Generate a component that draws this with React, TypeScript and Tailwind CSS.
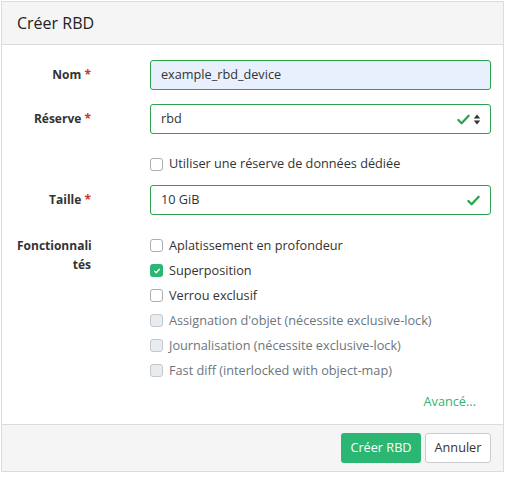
const Check = ({ className }: { className?: string }) => (
  <svg viewBox="0 0 16 16" className={className} fill="none">
    <path d="M2.5 8.5l3.5 3.5 7.5-8" stroke="#2ca24d" strokeWidth="2.4" strokeLinecap="round" strokeLinejoin="round" />
  </svg>
)

const Label = ({ text }: { text: string }) => (
  <label className="w-[74px] shrink-0 text-right font-bold text-[12px] text-[#333]">
    {text} <span className="text-[#c0392b]">*</span>
  </label>
)

const Box = ({ checked, disabled }: { checked?: boolean; disabled?: boolean }) => {
  if (checked)
    return (
      <span className="flex h-[13px] w-[13px] shrink-0 items-center justify-center rounded-[3px] bg-[#2bb673]">
        <svg viewBox="0 0 10 10" className="h-[8px] w-[8px]" fill="none">
          <path d="M2 5.2l2 2 4-4.4" stroke="#fff" strokeWidth="1.6" strokeLinecap="round" strokeLinejoin="round" />
        </svg>
      </span>
    )
  return (
    <span
      className={
        disabled
          ? 'h-[13px] w-[13px] shrink-0 rounded-[3px] border border-[#c3c8cd] bg-[#e9ecef]'
          : 'h-[13px] w-[13px] shrink-0 rounded-[3px] border border-[#a9aeb3] bg-white'
      }
    />
  )
}

const Option = ({ text, checked, disabled }: { text: string; checked?: boolean; disabled?: boolean }) => (
  <div className="flex h-[25px] items-center gap-[6px]">
    <Box checked={checked} disabled={disabled} />
    <span className={disabled ? 'text-[#6c757d]' : 'text-[#333]'}>{text}</span>
  </div>
)

export default function App() {
  return (
    <div className="h-[477px] w-[510px] bg-white pl-[1px] pt-[1px] text-[12.7px] font-['Open_Sans',sans-serif] text-[#333]">
      <div className="flex h-[471px] w-[503px] flex-col border border-[#dcdcdc]">
        <div className="flex h-[43px] shrink-0 items-center border-b border-[#dcdcdc] bg-[#f5f5f5] pl-[15px] text-[16px] text-[#222]">
          Créer RBD
        </div>

        <div className="flex flex-1 flex-col pl-[15px] pr-[12px] pt-[15px]">
          <div className="flex items-center">
            <Label text="Nom" />
            <div className="ml-[59px] flex h-[30px] flex-1 items-center rounded-[3px] border border-[#2ca24d] bg-[#e8f0fe] px-[10px]">
              example_rbd_device
            </div>
          </div>

          <div className="mt-[14px] flex items-center">
            <Label text="Réserve" />
            <div className="ml-[59px] flex h-[30px] flex-1 items-center rounded-[3px] border border-[#2ca24d] bg-white pl-[10px] pr-[9px]">
              <span className="flex-1">rbd</span>
              <Check className="h-[15px] w-[15px]" />
              <svg viewBox="0 0 8 12" className="ml-[2px] h-[11px] w-[8px]">
                <path d="M4 0.5L7.5 5H0.5z M4 11.5L0.5 7H7.5z" fill="#333" />
              </svg>
            </div>
          </div>

          <div className="ml-[133px] mt-[16px] flex h-[28px] items-center gap-[6px]">
            <Box />
            <span>Utiliser une réserve de données dédiée</span>
          </div>

          <div className="mt-[7px] flex items-center">
            <Label text="Taille" />
            <div className="ml-[59px] flex h-[30px] flex-1 items-center rounded-[3px] border border-[#2ca24d] bg-white pl-[10px] pr-[9px]">
              <span className="flex-1">10 GiB</span>
              <Check className="h-[15px] w-[15px]" />
            </div>
          </div>

          <div className="mt-[18px] flex">
            <div className="w-[74px] shrink-0 pt-[3px] text-right text-[12px] font-bold leading-[19px]">
              <div className="text-left">Fonctionnali</div>
              <div>tés</div>
            </div>
            <div className="ml-[59px] flex flex-col">
              <Option text="Aplatissement en profondeur" />
              <Option text="Superposition" checked />
              <Option text="Verrou exclusif" />
              <Option text="Assignation d'objet (nécessite exclusive-lock)" disabled />
              <Option text="Journalisation (nécessite exclusive-lock)" disabled />
              <Option text="Fast diff (interlocked with object-map)" disabled />
            </div>
          </div>

          <div className="mt-[9px] flex justify-end pr-[15px]">
            <span className="text-[#2bb673]">Avancé...</span>
          </div>
        </div>

        <div className="flex h-[47px] shrink-0 items-center justify-end gap-[4px] border-t border-[#dcdcdc] bg-[#f5f5f5] pr-[12px]">
          <button className="h-[30px] w-[80px] rounded-[3px] bg-[#2bb673] text-white">Créer RBD</button>
          <button className="h-[30px] w-[66px] rounded-[3px] border border-[#ccc] bg-white text-[#333]">Annuler</button>
        </div>
      </div>
    </div>
  )
}
